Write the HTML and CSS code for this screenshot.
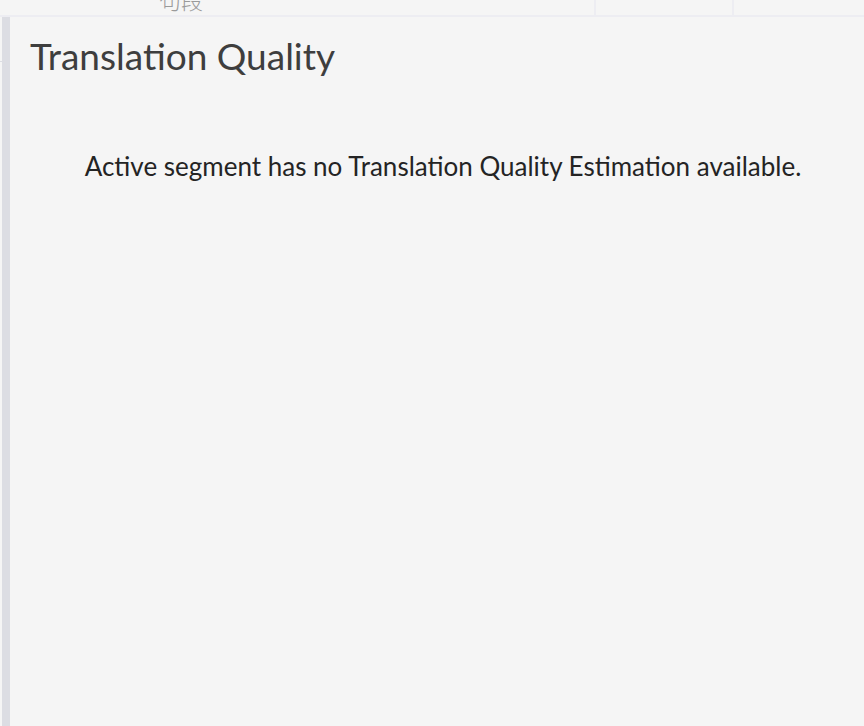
FILE: index.html
```html
<!DOCTYPE html>
<html lang="en">
<head>
<meta charset="utf-8">
<title>Translation Quality</title>
<link rel="stylesheet" href="styles.css">
</head>
<body>
  <div class="tabs">
    <div class="tab tab-main"><span class="tab-label">句段</span></div>
    <div class="tab tab-mid"></div>
    <div class="tab tab-end"></div>
  </div>
  <div class="main">
    <div class="gutter"><div class="gutter-tick"></div></div>
    <div class="bar"></div>
    <section class="panel">
      <h1 class="panel-title">Translation Quality</h1>
      <p class="panel-message">Active segment has no Translation Quality Estimation available.</p>
    </section>
  </div>
</body>
</html>
```

FILE: styles.css
```css
html, body {
  margin: 0;
  padding: 0;
  height: 100%;
  background: #f5f5f5;
  overflow: hidden;
}
body {
  display: flex;
  flex-direction: column;
  font-family: Lato, "Noto Sans CJK SC", sans-serif;
}
.tabs {
  display: flex;
  height: 15px;
  border-bottom: 2px solid #ededf2;
  overflow: hidden;
  flex: none;
}
.tab {
  display: flex;
  align-items: flex-end;
  height: 15px;
}
.tab-main {
  width: 594px;
  padding-left: 159px;
  box-sizing: border-box;
}
.tab-mid {
  width: 136px;
  border-left: 2px solid #ededf2;
}
.tab-end {
  flex: 1;
  border-left: 2px solid #ededf2;
}
.tab-label {
  font-family: "Noto Sans CJK SC", sans-serif;
  font-size: 22px;
  line-height: 22px;
  margin-bottom: 5px;
  color: #9a9a9a;
  font-weight: 300;
}
.main {
  flex: 1;
  display: flex;
  min-height: 0;
}
.gutter {
  width: 2px;
  flex: none;
  padding-top: 44px;
}
.gutter-tick {
  height: 1px;
  background: #dcdde3;
}
.bar {
  width: 8px;
  flex: none;
  background: #dcdde3;
}
.panel {
  flex: 1;
  padding: 0 8px 0 20px;
  color: #222;
}
.panel-title {
  margin: 17px 0 0;
  font-size: 37px;
  line-height: 44px;
  font-weight: 400;
  color: #3e3e3e;
}
.panel-message {
  margin: 73px 0 0;
  text-align: center;
  font-size: 26px;
  line-height: 30px;
  color: #242424;
}
```
